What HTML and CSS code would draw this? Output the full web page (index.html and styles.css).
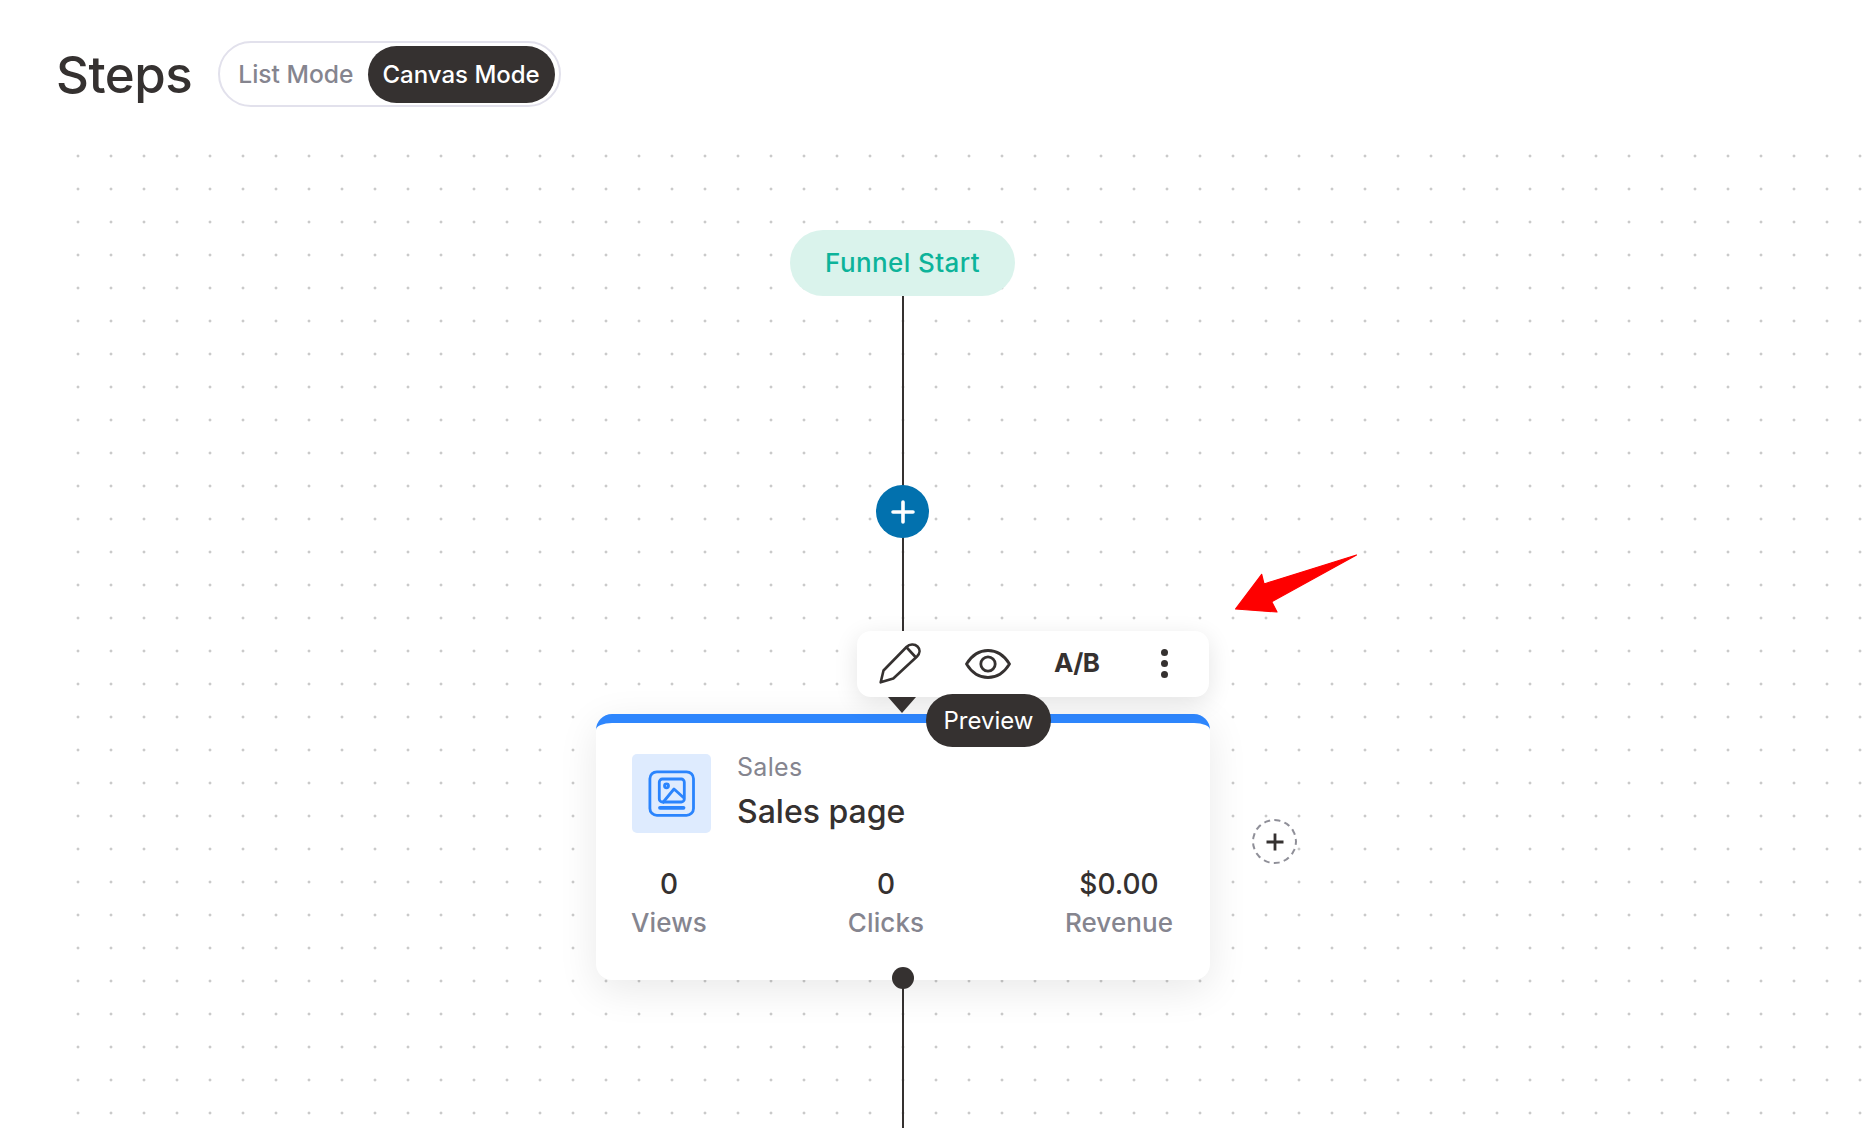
FILE: index.html
```html
<!DOCTYPE html>
<html lang="en">
<head>
<meta charset="utf-8">
<title>Steps</title>
<link rel="stylesheet" href="styles.css">
</head>
<body>
<header class="header">
  <h1 class="title">Steps</h1>
  <div class="mode-toggle">
    <span class="mode">List Mode</span>
    <span class="mode mode-active">Canvas Mode</span>
  </div>
</header>
<main class="canvas">
  <div class="line line-top"></div>
  <div class="line line-bottom"></div>
  <div class="start-node">Funnel Start</div>
  <button class="add-step" aria-label="Add step">
    <svg width="24" height="24" viewBox="0 0 24 24"><path d="M12 2v20M2 12h20" stroke="#fff" stroke-width="3.6" stroke-linecap="round" fill="none"/></svg>
  </button>
  <svg class="red-arrow" width="130" height="66" viewBox="0 0 130 66"><path d="M122.5 5 L30 34 L27.7 24.3 L1.5 59 L43 62 L37.7 51.7 Z" fill="#fe0000" stroke="#fe0000" stroke-width="1.2" stroke-linejoin="round"/></svg>
  <article class="step-card">
    <div class="card-head">
      <div class="page-icon">
        <svg width="48" height="48" viewBox="0 0 48 48" fill="none" stroke="#2a84fd" stroke-width="2.8">
          <rect x="1.9" y="1.8" width="43.6" height="43.6" rx="7"/>
          <rect x="11.3" y="9" width="25" height="23" rx="3"/>
          <circle cx="18.5" cy="15.8" r="2"/>
          <path d="M14.5 33 L26 19 L36 28" stroke-linejoin="round"/>
          <path d="M12 37.8h23.5" stroke-width="3.8" stroke-linecap="round"/>
        </svg>
      </div>
      <div class="card-titles">
        <div class="card-kicker">Sales</div>
        <div class="card-name">Sales page</div>
      </div>
    </div>
    <div class="stats">
      <div class="stat"><div class="stat-value">0</div><div class="stat-label">Views</div></div>
      <div class="stat"><div class="stat-value">0</div><div class="stat-label">Clicks</div></div>
      <div class="stat"><div class="stat-value">$0.00</div><div class="stat-label">Revenue</div></div>
    </div>
  </article>
  <div class="toolbar">
    <button class="tool" aria-label="Edit">
      <svg width="42" height="42" viewBox="0 0 42 42" fill="none" stroke="#353130" stroke-width="2.6" stroke-linejoin="round" stroke-linecap="round">
        <path d="M1.7 40.3 L4.5 28.5 L27.5 5 C30.5 2 35.5 1.5 38.5 4.5 C41.5 7.5 41 11.5 38 14.5 L14.3 36.5 Z"/>
        <path d="M27.7 5.5 L36.5 15"/>
      </svg>
    </button>
    <button class="tool" aria-label="Preview">
      <svg width="46" height="30" viewBox="0 0 46 30" fill="none" stroke="#353130" stroke-width="2.8" stroke-linejoin="round">
        <path d="M1.5 15 C7 6 14 1.5 23 1.5 C32 1.5 39 6 44.5 15 C39 24 32 28.5 23 28.5 C14 28.5 7 24 1.5 15 Z"/>
        <circle cx="23" cy="15" r="7.2"/>
      </svg>
    </button>
    <span class="tool-ab">A/B</span>
    <span class="tool-more"><i></i><i></i><i></i></span>
  </div>
  <div class="pointer"></div>
  <div class="tooltip">Preview</div>
  <div class="out-dot"></div>
  <button class="side-add" aria-label="Add branch">
    <svg width="20" height="20" viewBox="0 0 20 20"><path d="M10 1.5v17M1.5 10h17" stroke="#353130" stroke-width="2.8" fill="none"/></svg>
  </button>
</main>
</body>
</html>
```

FILE: styles.css
```css
* { box-sizing: border-box; }
html, body { margin: 0; height: 100%; }
body {
  width: 1874px;
  height: 1128px;
  overflow: hidden;
  background: #fff;
  color: #353130;
  font-family: Inter, "Liberation Sans", sans-serif;
  position: relative;
}
button { border: 0; padding: 0; background: none; font: inherit; }

.header {
  position: relative;
  z-index: 1;
  display: flex;
  align-items: flex-start;
  gap: 26px;
  padding: 41px 0 0 56px;
}
.title {
  margin: 0;
  padding-top: 1px;
  font-size: 51px;
  font-weight: 500;
  line-height: 66px;
  letter-spacing: -0.5px;
}
.mode-toggle {
  display: flex;
  align-items: center;
  gap: 14px;
  height: 66px;
  padding: 0 4px 0 18px;
  border: 2px solid #e2e1ec;
  border-radius: 33px;
}
.mode {
  font-size: 24.6px;
  font-weight: 500;
  color: #85858f;
  white-space: nowrap;
}
.mode-active {
  height: 57px;
  font-size: 24px;
  line-height: 57px;
  padding: 0 15px;
  border-radius: 29px;
  background: #353130;
  color: #fff;
}

.canvas {
  position: absolute;
  inset: 0;
  background-image: radial-gradient(circle at center, #a8a8a8 0, #a8a8a8 0.9px, transparent 1.25px);
  background-size: 33px 33px;
  background-position: 61.5px 139.5px;
  clip-path: inset(139px 0 0 62px);
}
.canvas > * { position: absolute; }

.line { left: 902px; width: 2px; background: #353130; }
.line-top { top: 296px; height: 336px; }
.line-bottom { top: 980px; height: 148px; }

.start-node {
  left: 790px;
  top: 230px;
  width: 225px;
  height: 66px;
  border-radius: 33px;
  background: #daf3ec;
  color: #0db39a;
  font-size: 26px;
  font-weight: 500;
  line-height: 66px;
  letter-spacing: 0.4px;
  text-align: center;
}
.add-step {
  left: 876px;
  top: 485px;
  width: 53px;
  height: 53px;
  border-radius: 50%;
  background: #0271ae;
  display: flex;
  align-items: center;
  justify-content: center;
}
.red-arrow { left: 1234px; top: 550px; }

.step-card {
  left: 596px;
  top: 714px;
  width: 614px;
  height: 266px;
  padding: 31px 36px 0;
  background: #fff;
  border-top: 9px solid #2e86fd;
  border-radius: 16px;
  box-shadow: 0 10px 40px rgba(0, 0, 0, 0.09);
}
.card-head { display: flex; align-items: center; gap: 26px; }
.page-icon {
  width: 79px;
  height: 79px;
  border-radius: 5px;
  background: #deebfe;
  display: flex;
  align-items: center;
  justify-content: center;
}
.card-titles { margin-top: -3px; }
.card-kicker { font-size: 25px; line-height: 30px; letter-spacing: 0.3px; color: #85858f; }
.card-name { margin-top: 10px; font-size: 32px; line-height: 40px; font-weight: 500; }
.stats {
  margin-top: 32px;
  position: relative;
  height: 78px;
}
.stat { position: absolute; text-align: center; top: 0; transform: translateX(-50%); white-space: nowrap; }
.stat:nth-child(1) { left: 37px; }
.stat:nth-child(2) { left: 254px; }
.stat:nth-child(3) { left: 487px; }
.stat-value { font-size: 28px; line-height: 38px; font-weight: 500; }
.stat-label { font-size: 26px; line-height: 40px; letter-spacing: 0.1px; color: #85858f; font-weight: 500; }

.toolbar {
  left: 857px;
  top: 631px;
  width: 352px;
  height: 66px;
  border-radius: 14px;
  background: #fff;
  box-shadow: 0 6px 24px rgba(0, 0, 0, 0.11);
  color: #353130;
}
.toolbar > * { position: absolute; }
.tool { display: block; line-height: 0; }
.tool:nth-child(1) { left: 22px; top: 11px; }
.tool:nth-child(2) { left: 108px; top: 18px; }
.tool-ab {
  left: 197px;
  top: 16px;
  font-size: 26px;
  line-height: 32px;
  font-weight: 700;
  letter-spacing: -0.5px;
}
.tool-more {
  left: 304px;
  top: 18px;
  display: flex;
  flex-direction: column;
  gap: 4px;
}
.tool-more i { display: block; width: 7px; height: 7px; border-radius: 50%; background: #353130; }

.pointer {
  left: 888px;
  top: 697px;
  width: 0;
  height: 0;
  border-left: 14.5px solid transparent;
  border-right: 14.5px solid transparent;
  border-top: 16px solid #353130;
}
.tooltip {
  left: 926px;
  top: 694px;
  width: 125px;
  height: 53px;
  border-radius: 27px;
  background: #353130;
  color: #fff;
  font-size: 24px;
  line-height: 53px;
  text-align: center;
}
.out-dot {
  left: 892px;
  top: 967px;
  width: 22px;
  height: 22px;
  border-radius: 50%;
  background: #353130;
}
.side-add {
  left: 1252px;
  top: 819px;
  width: 45px;
  height: 45px;
  border-radius: 50%;
  border: 2px dashed #8f8f98;
  background: #fff;
  display: flex;
  align-items: center;
  justify-content: center;
}
```
